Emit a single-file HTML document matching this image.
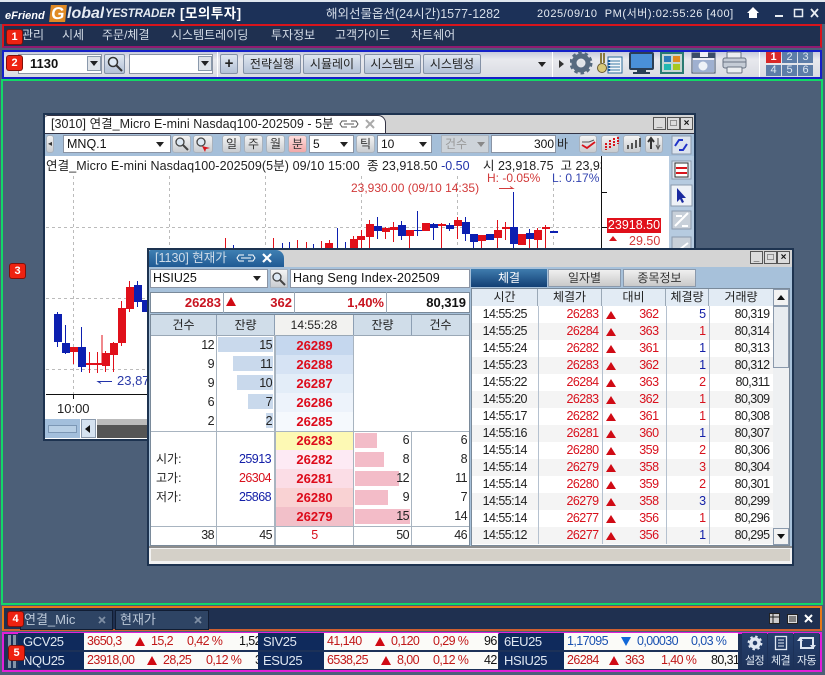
<!DOCTYPE html>
<html lang="ko"><head><meta charset="utf-8"><title>eFriend Global YesTrader</title>
<style>
html,body{margin:0;padding:0;width:825px;height:675px;overflow:hidden;background:#4c5f78}
body{position:relative;font:12px "Liberation Sans","Noto Sans CJK KR","NanumGothic",sans-serif;color:#111}
.a,.a *{box-sizing:border-box}
.a{position:absolute;white-space:nowrap;overflow:hidden}
.r{text-align:right}.c{text-align:center}
.box{position:absolute;box-sizing:border-box;background:transparent}
.m{position:absolute;top:27px;color:#d5dde8;font-size:12px;line-height:16px;white-space:nowrap}
.lab{position:absolute;width:15px;height:14px;background:#ee2211;border-radius:2px;color:#fff;font:bold 11px/14px "Liberation Sans",sans-serif;text-align:center;box-shadow:0 0 0 1px #80100a;z-index:50}
.tb{position:absolute;top:54px;height:20px;background:linear-gradient(#dfe6f0,#b3c1d6);border:1px solid #8491a6;border-radius:2px;font-size:12px;line-height:18px;text-align:center;color:#222;box-sizing:border-box;white-space:nowrap}
.cb{position:absolute;background:#fff;border:1px solid #8a94a4;box-sizing:border-box;white-space:nowrap;overflow:hidden}
.ar{position:absolute;width:0;height:0;border-left:4px solid transparent;border-right:4px solid transparent;border-top:5px solid #222}
.ib{position:absolute;top:135px;height:18px;background:linear-gradient(#f4f4f4,#c9ccd0);border:1px solid #a9b2bd;border-radius:3px;box-sizing:border-box;text-align:center;line-height:16px;font-size:12px;color:#333}
.sb{position:absolute;box-sizing:border-box;background:#dfe3e8;border:1px solid #8a99ac}
.wb{position:absolute;width:13px;height:13px;background:#dcdcdc;border:1px solid #555;box-sizing:border-box;font:bold 10px/11px "Liberation Sans",sans-serif;text-align:center;color:#111}
.hd{position:absolute;background:#d0dde9;text-align:center;color:#222;font-size:12px;line-height:20px;height:20px;top:315px;border-right:1px solid #8d9fb3;box-sizing:border-box}
.n{position:absolute;font-size:12.500px;letter-spacing:-.55px;line-height:16px;text-align:right;white-space:nowrap;color:#222}
.p{position:absolute;left:276px;width:77px;height:19px;font:bold 13px/19px "Liberation Sans",sans-serif;color:#dd0b1b;text-align:center}
.bar{position:absolute;height:15px}
table{border-collapse:collapse;table-layout:fixed;position:absolute;left:472px;top:306px;width:301px}
td{height:17px;padding:0 3px;font-size:12.500px;letter-spacing:-.55px;line-height:17px;text-align:right;border-right:1px solid #b5c1cf;color:#222;overflow:hidden;white-space:nowrap}
tr:nth-child(even) td{background:#f4f4f4}
td.t{text-align:center}
td.x{color:#d8101c}td.b{color:#1420a8}
td.d{position:relative;color:#d8101c;padding-right:7px}
td.d:before{content:"";position:absolute;left:3px;top:5px;border-left:5px solid transparent;border-right:5px solid transparent;border-bottom:8px solid #d00a14}
.nm{position:absolute;width:66px;height:17px;background:#0f2a5c;color:#dfe7f2;font-size:13px;line-height:18px;padding-left:5px;box-sizing:border-box;letter-spacing:-.4px}
.dt{position:absolute;width:174px;height:17px;background:#fbfbf8;overflow:hidden}
.dt span{position:absolute;top:0;font-size:12.500px;line-height:17px;letter-spacing:-.6px;white-space:nowrap}
.up{position:absolute;top:4px;width:0;height:0;border-left:5px solid transparent;border-right:5px solid transparent;border-bottom:9px solid #d00a14}
.dn{position:absolute;top:4px;width:0;height:0;border-left:5px solid transparent;border-right:5px solid transparent;border-top:9px solid #1268d8}
.rd{color:#c01818}.bl{color:#1850b0}
.bt{position:absolute;top:633px;width:25px;height:37px;background:linear-gradient(#26416e,#1c3158);color:#dfe7f2;font-size:11px;text-align:center;box-sizing:border-box;padding-top:21px;line-height:14px;letter-spacing:-.6px}
</style></head><body>

<!-- title bar -->
<div class="a" style="left:0;top:0;width:825px;height:24px;background:#1c3158;border-top:2px solid #dfe6ee"></div>
<div class="a" style="left:5px;top:9px;color:#fff;font:italic bold 11px/14px 'Liberation Sans',sans-serif">eFriend</div>
<div class="a" style="left:50px;top:5px;width:16px;height:17px;background:#e08a25;color:#fff;font:bold 17px/17px 'Liberation Sans',sans-serif;text-align:center;transform:skewX(-6deg)">G</div>
<div class="a" style="left:67px;top:5px;color:#e6ebf2;font:italic bold 16px/18px 'Liberation Sans',sans-serif">lobal</div>
<div class="a" style="left:105px;top:7px;color:#e6ebf2;font:italic bold 11.500px/15px 'Liberation Sans',sans-serif;letter-spacing:-.1px">YESTRADER</div>
<div class="a" style="left:180px;top:5px;color:#fff;font-weight:bold;font-size:13.500px;line-height:18px;letter-spacing:.5px">[모의투자]</div>
<div class="a" style="left:326px;top:5px;color:#d5dde8;font-size:12.500px;line-height:18px">해외선물옵션(24시간)1577-1282</div>
<div class="a" style="left:537px;top:6px;color:#e6ebf2;font-size:11px;line-height:16px;letter-spacing:.55px">2025/09/10&nbsp; PM(서버):02:55:26 [400]</div>
<svg class="a" style="left:745px;top:4px" width="78" height="18" viewBox="0 0 78 18"><path d="M2 9 8 3l6 6h-2v5H4V9z" fill="#fff"/><rect x="30" y="11" width="8" height="2" fill="#e8edf3"/><rect x="49.500" y="5.500" width="8" height="7" fill="none" stroke="#e8edf3" stroke-width="1.500"/><path d="M66 5l7 8M73 5l-7 8" stroke="#e8edf3" stroke-width="1.800"/></svg>

<!-- menu -->
<div class="box" style="left:2px;top:24px;width:820px;height:24px;background:#1f3050;border:2px solid #d8141c;border-bottom-color:#901a70"></div>
<span class="m" style="left:22px">관리</span><span class="m" style="left:62px">시세</span><span class="m" style="left:102px">주문/체결</span><span class="m" style="left:171px">시스템트레이딩</span><span class="m" style="left:271px">투자정보</span><span class="m" style="left:335px">고객가이드</span><span class="m" style="left:411px">차트쉐어</span>
<div class="lab" style="left:7px;top:30px">1</div>

<!-- toolbar -->
<div class="box" style="left:2px;top:50px;width:820px;height:29px;background:linear-gradient(#c8cbdc,#e8e9ee 30%,#d9dbe2);border:2px solid #1420c8"></div>
<div class="a" style="left:18px;top:54px;width:84px;height:20px;background:#fff;border:1px solid #8a94a4;font:bold 13px/18px 'Liberation Sans',sans-serif;padding-left:11px">1130</div>
<div class="sb" style="left:87px;top:56px;width:14px;height:15px"></div><div class="ar" style="left:90px;top:61px"></div>
<div class="tb" style="left:104px;width:21px"></div>
<svg class="a" style="left:106px;top:55px" width="18" height="18"><circle cx="7" cy="7" r="4.500" fill="#dde8f3" stroke="#333" stroke-width="1.500"/><path d="M10.500 10.500 16 16" stroke="#333" stroke-width="2"/></svg>
<div class="a" style="left:129px;top:54px;width:84px;height:20px;background:#fff;border:1px solid #8a94a4"></div>
<div class="sb" style="left:198px;top:56px;width:14px;height:15px"></div><div class="ar" style="left:201px;top:61px"></div>
<div class="a" style="left:217px;top:52px;width:1px;height:25px;background:#fff"></div>
<div class="tb" style="left:220px;width:18px;font-weight:bold;font-size:15px;line-height:17px">+</div>
<div class="tb" style="left:243px;width:58px">전략실행</div><div class="tb" style="left:303px;width:58px">시뮬레이</div><div class="tb" style="left:364px;width:57px">시스템모</div><div class="tb" style="left:423px;width:58px">시스템성</div>
<div class="ar" style="left:538px;top:62px"></div>
<div class="a" style="left:552px;top:52px;width:1px;height:25px;background:#fff"></div>
<div class="a" style="left:559px;top:60px;width:0;height:0;border-top:4px solid transparent;border-bottom:4px solid transparent;border-left:5px solid #333"></div>
<svg class="a" style="left:570px;top:50px" width="180" height="27" viewBox="570 50 180 27">
<circle cx="581" cy="63" r="7" fill="none" stroke="#566a80" stroke-width="5"/><circle cx="581" cy="63" r="10" fill="none" stroke="#566a80" stroke-width="3" stroke-dasharray="3.500 2.800"/><circle cx="581" cy="63" r="3" fill="#dfe3e8"/>
<path d="M601 53v10M604 53v10" stroke="#8a7a40" stroke-width="2"/><circle cx="602" cy="68" r="4.500" fill="#d9c97a" stroke="#6a5a30"/><rect x="608" y="57" width="14" height="16" fill="#f2f6fa" stroke="#2a6a9a"/><path d="M611 61h9M611 64h9M611 67h9M611 70h9" stroke="#3a7aa5"/><path d="M609 60v11" stroke="#1a5a9a" stroke-width="3" stroke-dasharray="2 1"/>
<rect x="630" y="53" width="23" height="16" rx="1" fill="#4a90d8" stroke="#2a3e55" stroke-width="2"/><path d="M637 69h9v3h-9zM633 72h17v2h-17z" fill="#2a3e55"/>
<rect x="661" y="53" width="22" height="20" fill="#c5d5d2" stroke="#2a7a72" stroke-width="2"/><rect x="664" y="56" width="7" height="6" fill="#2a7ab8"/><rect x="673" y="56" width="7" height="6" fill="#e08a20"/><rect x="664" y="64" width="7" height="6" fill="#20b8b0"/><rect x="673" y="64" width="7" height="6" fill="#a8c820"/>
<rect x="692" y="53" width="23" height="20" fill="#eef0f5" stroke="#3a4c68"/><rect x="692" y="53" width="23" height="5" fill="#3a4c68"/><rect x="700" y="52" width="8" height="5" fill="#eef0f5"/><rect x="693" y="60" width="21" height="12" fill="#9fb0d0"/><circle cx="703" cy="66" r="4.500" fill="#eef2f8"/>
<rect x="727" y="52" width="14" height="7" rx="1" fill="#eceef1" stroke="#6a7484"/><rect x="723" y="58" width="23" height="10" rx="2" fill="#c5ccd6" stroke="#6a7484"/><rect x="727" y="67" width="15" height="6" rx="1" fill="#eceef1" stroke="#6a7484"/><path d="M723 62h23" stroke="#6a7484"/>
</svg>
<div class="a" style="left:759px;top:52px;width:1px;height:25px;background:#fff"></div>
<div class="a c" style="left:766px;top:52px;width:15px;height:11px;background:#d82828;color:#fff;font:bold 11px/11px 'Liberation Sans',sans-serif">1</div>
<div class="a c" style="left:782px;top:52px;width:15px;height:11px;background:#5d7da8;color:#dde6f0;font:11px/11px 'Liberation Sans',sans-serif">2</div>
<div class="a c" style="left:798px;top:52px;width:15px;height:11px;background:#5d7da8;color:#dde6f0;font:11px/11px 'Liberation Sans',sans-serif">3</div>
<div class="a c" style="left:766px;top:65px;width:15px;height:11px;background:#5d7da8;color:#dde6f0;font:11px/11px 'Liberation Sans',sans-serif">4</div>
<div class="a c" style="left:782px;top:65px;width:15px;height:11px;background:#5d7da8;color:#dde6f0;font:11px/11px 'Liberation Sans',sans-serif">5</div>
<div class="a c" style="left:798px;top:65px;width:15px;height:11px;background:#5d7da8;color:#dde6f0;font:11px/11px 'Liberation Sans',sans-serif">6</div>
<div class="lab" style="left:7px;top:56px">2</div>

<!-- workspace -->
<div class="box" style="left:1px;top:79px;width:822px;height:526px;background:#4c5f78;border:2px solid #12d868"></div>
<div class="lab" style="left:10px;top:264px">3</div>

<!-- chart window -->
<div class="a" style="left:43px;top:113px;width:653px;height:328px;background:#fff;border:2px solid #1d3350"></div>
<div class="a" style="left:45px;top:115px;width:649px;height:18px;background:#d4d4d4"></div>
<div class="a" style="left:45px;top:115px;width:341px;height:18px;background:#fff;border-radius:3px 8px 0 0;border-right:1px solid #334;border-top:1px solid #334"></div>
<div class="a" style="left:51px;top:115px;font-size:12.500px;line-height:18px;color:#222;letter-spacing:.05px">[3010] 연결_Micro E-mini Nasdaq100-202509 - 5분</div>
<svg class="a" style="left:339px;top:119px" width="20" height="10"><path d="M8 2H3L1 5l2 3h5M12 2h5l2 3-2 3h-5M5 5h10" fill="none" stroke="#555"/></svg>
<svg class="a" style="left:364px;top:118px" width="12" height="12"><path d="M2 2l8 8M10 2l-8 8" stroke="#aaa" stroke-width="2"/></svg>
<div class="wb" style="left:653px;top:117px">_</div><div class="wb" style="left:667px;top:117px">□</div><div class="wb" style="left:680px;top:117px">×</div>
<div class="a" style="left:45px;top:133px;width:649px;height:23px;background:#a5bfd9;border-top:1px solid #334"></div>
<div class="ib" style="left:46px;width:8px;font-size:8px">◂</div>
<div class="cb" style="left:63px;top:135px;width:108px;height:18px;font-size:12.500px;line-height:16px;padding-left:3px">MNQ.1</div><div class="ar" style="left:156px;top:142px"></div>
<div class="ib" style="left:172px;width:19px"></div><div class="ib" style="left:193px;width:20px"></div>
<svg class="a" style="left:174px;top:136px" width="40" height="16"><circle cx="6" cy="6" r="4" fill="#dde8f3" stroke="#444" stroke-width="1.300"/><path d="M9 9l5 5" stroke="#444" stroke-width="2"/><circle cx="27" cy="6" r="4" fill="#dde8f3" stroke="#444" stroke-width="1.300"/><path d="M28 10l8 2-4 1-1 3z" fill="#d8141c"/></svg>
<div class="ib" style="left:222px;width:19px">일</div><div class="ib" style="left:244px;width:19px">주</div><div class="ib" style="left:266px;width:19px">월</div><div class="ib" style="left:288px;width:19px;background:linear-gradient(#fdd,#f2a8a8)">분</div>
<div class="cb" style="left:309px;top:135px;width:45px;height:18px;line-height:16px;padding-left:3px">5</div><div class="ar" style="left:340px;top:142px"></div>
<div class="ib" style="left:356px;width:19px">틱</div>
<div class="cb" style="left:377px;top:135px;width:55px;height:18px;line-height:16px;padding-left:3px">10</div><div class="ar" style="left:419px;top:142px"></div>
<div class="ib" style="left:441px;width:48px;background:#cdd3d9;color:#999;text-align:left;padding-left:3px;border-radius:0">건수</div><div class="ar" style="left:477px;top:142px;border-top-color:#888"></div>
<div class="cb r" style="left:491px;top:135px;width:65px;height:18px;line-height:16px;padding-right:1px">300</div>
<div class="a" style="left:557px;top:135px;font-size:12px;line-height:18px;color:#222">바</div>
<div class="ib" style="left:579px;width:18px"></div><div class="ib" style="left:601px;width:18px"></div><div class="ib" style="left:623px;width:18px"></div><div class="ib" style="left:645px;width:18px"></div>
<svg class="a" style="left:579px;top:135px" width="86" height="18"><path d="M3 10l5 3 8-6" fill="none" stroke="#d8141c" stroke-width="1.800"/><path d="M3 7h7l5-2" fill="none" stroke="#555"/><path d="M27 8v7M31 5v8M35 3v9M39 2v7" stroke="#d8141c" stroke-width="2" stroke-dasharray="2 1"/><path d="M49 14v-4M53 14v-6M57 13v-8M61 12v-9" stroke="#555" stroke-width="2"/><path d="M72 14V5M69 7l3-4 3 4" stroke="#333" stroke-width="2" fill="none"/><path d="M79 3v10M77 10l2 4 2-4" stroke="#555" fill="none"/></svg>
<div class="a" style="left:669px;top:156px;width:25px;height:284px;background:#b6cbe0"></div>
<svg class="a" style="left:669px;top:133px" width="25" height="125"><rect x="3" y="3" width="19" height="18" fill="#dce4ee" stroke="#8a99ac"/><path d="M6 13l4-6 4 0M18 11l-4 6-4 0" fill="none" stroke="#2033c8" stroke-width="2"/><rect x="3" y="28" width="19" height="18" fill="#dce4ee" stroke="#8a99ac"/><path d="M6 30h13v14H6z" fill="#fff" stroke="#333"/><path d="M7 35h11M7 40h11" stroke="#d8141c" stroke-width="2"/><rect x="2" y="52" width="21" height="21" fill="#eef2f7" stroke="#8a99ac"/><path d="M8 55l0 14 3-3 2 4 2-1-2-4 4 0z" fill="#1a2aa0"/><rect x="3" y="78" width="19" height="18" fill="#c8d0d9" stroke="#8a99ac"/><path d="M6 93l13-13M7 83h6M13 93h6" stroke="#fff" stroke-width="2"/><rect x="3" y="104" width="19" height="20" fill="#c8d0d9" stroke="#8a99ac"/><path d="M6 120l13-10" stroke="#fff" stroke-width="2"/></svg>

<svg class="a" style="left:0;top:0;overflow:hidden" width="825" height="675" viewBox="0 0 825 675">
<g stroke="#bbb" stroke-dasharray="3 3"><path d="M73.500 176V394M169.500 176V394M265.500 176V394M361.500 176V394M457.500 176V394M553.500 176V394"/><path d="M46 227.500H600M46 298.500H600M46 369.500H600"/></g>
<path d="M601.500 156V394M601 192.500h6M601 227.500h6M46 394.500H601M73.500 394v5" stroke="#111" fill="none"/>
<path d="M499 188.500h14l-3-2" stroke="#d23a3a" fill="none"/>
<path d="M112 381.500H98l3 2" stroke="#2233aa" fill="none"/>
<g stroke="#e0101a" fill="#e0101a">
<path d="M225.500 238v10M273.500 238v10M297.500 240v8M306.500 242v6M321.500 241v7M329.500 240v8M353.500 236v12M361.500 230v18M369.500 220v28M385.500 227v12M393.500 222v20M409.500 230v20M441.500 223v25M457.500 217v22M481.500 235v13M505.500 222v18M497.500 220v28M529.500 229v20M537.500 228v20M545.500 225v25M102 335v30M73.500 352v12M89.500 352v21M97.500 352v21M105.500 351v21M113.500 342v30M121.500 301v45M129.500 281v31"/>
<g stroke="none"><rect x="325" y="243" width="8" height="6"/><rect x="350" y="239" width="8" height="10"/><rect x="357" y="236" width="8" height="4"/><rect x="366" y="224" width="8" height="13"/><rect x="382" y="228" width="8" height="4"/><rect x="390" y="227" width="8" height="3"/><rect x="406" y="230" width="8" height="6"/><rect x="422" y="223" width="8" height="8"/><rect x="438" y="224" width="8" height="2"/><rect x="454" y="220" width="8" height="6"/><rect x="478" y="235" width="8" height="6"/><rect x="494" y="230" width="8" height="8"/><rect x="502" y="227" width="8" height="2"/><rect x="518" y="234" width="8" height="11"/><rect x="534" y="230" width="8" height="10"/><rect x="542" y="227" width="8" height="2"/><rect x="70" y="347" width="8" height="5"/><rect x="86" y="363" width="8" height="2"/><rect x="94" y="363" width="8" height="2"/><rect x="102" y="353" width="8" height="13"/><rect x="110" y="343" width="8" height="12"/><rect x="118" y="308" width="8" height="35"/><rect x="126" y="287" width="8" height="22"/></g>
</g>
<g stroke="#0c1fb0" fill="#0c1fb0">
<path d="M233.500 245v3M282.500 243v5M289.500 242v6M313.500 244v4M337.500 228v20M345.500 242v6M377.500 217v22M401.500 221v19M417.500 211v25M433.500 223v17M449.500 223v8M465.500 217v24M473.500 234v15M513.500 192v56M529.500 229v10M57.500 312v35M65.500 325v29M81.500 327v45M137.500 281v26"/>
<g stroke="none"><rect x="374" y="226" width="8" height="5"/><rect x="398" y="225" width="8" height="11"/><rect x="414" y="230" width="8" height="1"/><rect x="430" y="224" width="8" height="4"/><rect x="446" y="225" width="8" height="4"/><rect x="462" y="222" width="8" height="12"/><rect x="470" y="234" width="8" height="8"/><rect x="486" y="234" width="8" height="6"/><rect x="510" y="227" width="8" height="17"/><rect x="526" y="233" width="8" height="6"/><rect x="550" y="231" width="8" height="2"/><rect x="54" y="314" width="8" height="28"/><rect x="62" y="343" width="8" height="10"/><rect x="78" y="347" width="8" height="20"/><rect x="134" y="285" width="8" height="17"/><rect x="142" y="300" width="6" height="12"/></g>
</g>
<path d="M97 438v-14l20 -1 30 2v13z" fill="#555"/>
</svg>
<div class="a" style="left:46px;top:158px;font-size:12.500px;line-height:16px;color:#222;letter-spacing:.1px">연결_Micro E-mini Nasdaq100-202509(5분) 09/10 15:00</div>
<div class="a" style="left:367px;top:158px;font-size:12.500px;line-height:16px;color:#222">종 23,918.50 <span style="color:#2233aa">-0.50</span></div>
<div class="a" style="left:483px;top:158px;width:118px;font-size:12.500px;line-height:16px;color:#222">시 23,918.75&nbsp; 고 23,930</div>
<div class="a" style="left:487px;top:171px;font-size:12px;line-height:14px;color:#d23a3a">H: -0.05%</div>
<div class="a" style="left:552px;top:171px;font-size:12px;line-height:14px;color:#3344b0">L: 0.17%</div>
<div class="a" style="left:351px;top:181px;font-size:12px;line-height:15px;color:#d23a3a">23,930.00 (09/10 14:35)</div>
<div class="a c" style="left:607px;top:218px;width:54px;height:15px;background:#e0101a;color:#fff;font-size:12.500px;line-height:15px">23918.50</div>
<div class="a" style="left:609px;top:236px;width:0;height:0;border-left:4px solid transparent;border-right:4px solid transparent;border-bottom:5px solid #d8141c"></div>
<div class="a" style="left:629px;top:234px;font-size:12.500px;line-height:15px;color:#d23a3a">29.50</div>
<div class="a" style="left:117px;top:373px;width:30px;font-size:13px;line-height:16px;color:#2a3aa8">23,87</div>
<div class="a" style="left:57px;top:401px;font-size:13px;line-height:16px;color:#222">10:00</div>
<div class="a" style="left:45px;top:419px;width:35px;height:19px;background:#a3bfdc"></div>
<div class="a" style="left:48px;top:425px;width:29px;height:8px;border:1px solid #7c97b5;background:#b8cfe5"></div>
<div class="a" style="left:81px;top:419px;width:15px;height:19px;background:#d5e2f0;border:1px solid #8a99ac"></div>
<div class="a" style="left:85px;top:425px;width:0;height:0;border-top:4px solid transparent;border-bottom:4px solid transparent;border-right:5px solid #111"></div>
<div class="a" style="left:97px;top:419px;width:50px;height:6px;background:#bbb"></div>

<!-- quote window -->
<div class="a" style="left:147px;top:248px;width:647px;height:318px;background:#a7c1da;border:2px solid #1d3350"></div>
<div class="a" style="left:149px;top:250px;width:643px;height:17px;background:#d4d4d4"></div>
<div class="a" style="left:149px;top:250px;width:135px;height:17px;background:linear-gradient(#3f7fb2,#205a94);border-radius:2px 8px 0 0"></div>
<div class="a" style="left:155px;top:250px;font-size:12.500px;line-height:17px;color:#cfdce9">[1130] 현재가</div>
<svg class="a" style="left:236px;top:253px" width="20" height="10"><path d="M8 2H3L1 5l2 3h5M12 2h5l2 3-2 3h-5M5 5h10" fill="none" stroke="#fff"/></svg>
<svg class="a" style="left:261px;top:252px" width="12" height="12"><path d="M2 2l8 8M10 2l-8 8" stroke="#fff" stroke-width="2.200"/></svg>
<div class="wb" style="left:750px;top:251px">_</div><div class="wb" style="left:764px;top:251px">□</div><div class="wb" style="left:777px;top:251px">×</div>
<div class="cb" style="left:150px;top:269px;width:118px;height:19px;font-size:12.500px;line-height:17px;padding-left:2px">HSIU25</div><div class="ar" style="left:253px;top:276px"></div>
<div class="ib" style="left:270px;top:269px;width:18px;height:19px;border-radius:0"></div>
<svg class="a" style="left:271px;top:271px" width="16" height="16"><circle cx="6" cy="6" r="4" fill="#dde8f3" stroke="#444" stroke-width="1.300"/><path d="M9 9l5 5" stroke="#444" stroke-width="2"/></svg>
<div class="cb" style="left:290px;top:269px;width:180px;height:19px;font-size:12.500px;line-height:17px;padding-left:2px;letter-spacing:.2px">Hang Seng Index-202509</div>
<div class="a" style="left:150px;top:292px;width:320px;height:21px;background:#fff;border:1px solid #7a8a9a"></div>
<div class="a" style="left:223px;top:292px;width:1px;height:21px;background:#9aa8b6"></div><div class="a" style="left:294px;top:292px;width:1px;height:21px;background:#9aa8b6"></div><div class="a" style="left:386px;top:292px;width:1px;height:21px;background:#9aa8b6"></div>
<div class="a r" style="left:150px;top:293px;width:71px;font:bold 13px/19px 'Liberation Sans',sans-serif;color:#c81420">26283</div>
<div class="a" style="left:226px;top:297px;width:0;height:0;border-left:5px solid transparent;border-right:5px solid transparent;border-bottom:9px solid #d00a14"></div>
<div class="a r" style="left:240px;top:293px;width:52px;font:bold 13px/19px 'Liberation Sans',sans-serif;color:#c81420">362</div>
<div class="a r" style="left:300px;top:293px;width:84px;font:bold 13px/19px 'Liberation Sans',sans-serif;color:#c81420">1,40%</div>
<div class="a r" style="left:390px;top:293px;width:76px;font:bold 13px/19px 'Liberation Sans',sans-serif;color:#111">80,319</div>

<div class="a" style="left:150px;top:314px;width:320px;height:232px;background:#fff;border:1px solid #7a8a9a"></div>
<div class="hd" style="left:151px;width:66px">건수</div><div class="hd" style="left:217px;width:58px">잔량</div><div class="hd" style="left:275px;width:79px;background:#f2f2f0">14:55:28</div><div class="hd" style="left:354px;width:58px">잔량</div><div class="hd" style="left:412px;width:57px;border-right:0">건수</div>
<div class="a" style="left:151px;top:335px;width:318px;height:1px;background:#9aa8b6"></div>
<div class="a" style="left:216px;top:335px;width:1px;height:210px;background:#a8b4c0"></div>
<div class="a" style="left:274px;top:335px;width:2px;height:210px;background:#a8b4c0"></div>
<div class="a" style="left:353px;top:335px;width:1px;height:210px;background:#a8b4c0"></div>
<div class="a" style="left:411px;top:431px;width:1px;height:114px;background:#a8b4c0"></div>
<div class="a" style="left:151px;top:431px;width:318px;height:1px;background:#a8b4c0"></div>
<div class="a" style="left:151px;top:526px;width:318px;height:1px;background:#a8b4c0"></div>

<div class="bar" style="left:218px;top:337px;width:55px;background:#c9d9ec"></div>
<div class="bar" style="left:233px;top:356px;width:40px;background:#c9d9ec"></div>
<div class="bar" style="left:237px;top:375px;width:36px;background:#c9d9ec"></div>
<div class="bar" style="left:248px;top:394px;width:25px;background:#c9d9ec"></div>
<div class="bar" style="left:266px;top:413px;width:7px;background:#c9d9ec"></div>
<div class="a" style="left:276px;top:336px;width:77px;height:19px;background:#c5d7ee"></div>
<div class="a" style="left:276px;top:355px;width:77px;height:19px;background:#d6e3f4"></div>
<div class="a" style="left:276px;top:374px;width:77px;height:19px;background:#e3edf8"></div>
<div class="a" style="left:276px;top:393px;width:77px;height:19px;background:#edf3fb"></div>
<div class="a" style="left:276px;top:412px;width:77px;height:19px;background:#f5f9fd"></div>
<div class="a" style="left:276px;top:432px;width:77px;height:18px;background:#fdf9b4"></div>
<div class="a" style="left:276px;top:450px;width:77px;height:19px;background:#fdeaf4"></div>
<div class="a" style="left:276px;top:469px;width:77px;height:19px;background:#fbdde6"></div>
<div class="a" style="left:276px;top:488px;width:77px;height:19px;background:#f9d2d3"></div>
<div class="a" style="left:276px;top:507px;width:77px;height:19px;background:#f2c0c9"></div>
<span class="p" style="top:336px">26289</span><span class="p" style="top:355px">26288</span><span class="p" style="top:374px">26287</span><span class="p" style="top:393px">26286</span><span class="p" style="top:412px">26285</span><span class="p" style="top:431px">26283</span><span class="p" style="top:450px">26282</span><span class="p" style="top:469px">26281</span><span class="p" style="top:488px">26280</span><span class="p" style="top:507px">26279</span>
<span class="n" style="left:170px;width:44px;top:337px">12</span><span class="n" style="left:170px;width:44px;top:356px">9</span><span class="n" style="left:170px;width:44px;top:375px">9</span><span class="n" style="left:170px;width:44px;top:394px">6</span><span class="n" style="left:170px;width:44px;top:413px">2</span>
<span class="n" style="left:230px;width:42px;top:337px">15</span><span class="n" style="left:230px;width:42px;top:356px">11</span><span class="n" style="left:230px;width:42px;top:375px">10</span><span class="n" style="left:230px;width:42px;top:394px">7</span><span class="n" style="left:230px;width:42px;top:413px">2</span>
<div class="bar" style="left:355px;top:433px;width:22px;background:#f3bcc8"></div><div class="bar" style="left:355px;top:452px;width:29px;background:#f3bcc8"></div><div class="bar" style="left:355px;top:471px;width:44px;background:#f3bcc8"></div><div class="bar" style="left:355px;top:490px;width:33px;background:#f3bcc8"></div><div class="bar" style="left:355px;top:509px;width:55px;background:#f3bcc8"></div>
<span class="n" style="left:370px;width:39px;top:432px">6</span><span class="n" style="left:370px;width:39px;top:451px">8</span><span class="n" style="left:370px;width:39px;top:470px">12</span><span class="n" style="left:370px;width:39px;top:489px">9</span><span class="n" style="left:370px;width:39px;top:508px">15</span>
<span class="n" style="left:425px;width:42px;top:432px">6</span><span class="n" style="left:425px;width:42px;top:451px">8</span><span class="n" style="left:425px;width:42px;top:470px">11</span><span class="n" style="left:425px;width:42px;top:489px">7</span><span class="n" style="left:425px;width:42px;top:508px">14</span>
<span class="n" style="left:156px;top:451px;letter-spacing:0;font-size:12px">시가:</span><span class="n" style="left:156px;top:470px;letter-spacing:0;font-size:12px">고가:</span><span class="n" style="left:156px;top:489px;letter-spacing:0;font-size:12px">저가:</span>
<span class="n" style="left:230px;width:41px;top:451px;color:#1420a8">25913</span><span class="n" style="left:230px;width:41px;top:470px;color:#d8101c">26304</span><span class="n" style="left:230px;width:41px;top:489px;color:#1420a8">25868</span>
<span class="n" style="left:170px;width:44px;top:527px">38</span><span class="n" style="left:230px;width:42px;top:527px">45</span><span class="n c" style="left:276px;width:77px;top:527px;color:#d8101c;text-align:center">5</span><span class="n" style="left:370px;width:39px;top:527px">50</span><span class="n" style="left:425px;width:42px;top:527px">46</span>

<div class="a" style="left:149px;top:546px;width:643px;height:18px;background:#f2f2f2;border-top:2px solid #8d8d8d"></div>
<div class="a" style="left:151px;top:549px;width:639px;height:12px;background:#d4d0c8"></div>

<!-- right panel -->
<div class="a c" style="left:471px;top:269px;width:76px;height:18px;background:linear-gradient(#3f7cae,#123f74);color:#fff;font-size:12px;line-height:18px">체결</div>
<div class="a c" style="left:548px;top:269px;width:73px;height:18px;background:linear-gradient(#f0f0f0,#c9c9c9);border:1px solid #8a99ac;font-size:12px;line-height:16px;color:#333">일자별</div>
<div class="a c" style="left:623px;top:269px;width:73px;height:18px;background:linear-gradient(#f0f0f0,#c9c9c9);border:1px solid #8a99ac;font-size:12px;line-height:16px;color:#333">종목정보</div>
<div class="a" style="left:471px;top:288px;width:319px;height:258px;background:#fff;border:1px solid #7a8a9a"></div>
<div class="a c" style="left:472px;top:289px;width:66px;height:17px;background:#e2ebf4;border-right:1px solid #9aa8b6;line-height:17px;color:#222">시간</div>
<div class="a c" style="left:538px;top:289px;width:64px;height:17px;background:#e2ebf4;border-right:1px solid #9aa8b6;line-height:17px;color:#222">체결가</div>
<div class="a c" style="left:602px;top:289px;width:64px;height:17px;background:#e2ebf4;border-right:1px solid #9aa8b6;line-height:17px;color:#222">대비</div>
<div class="a c" style="left:666px;top:289px;width:43px;height:17px;background:#e2ebf4;border-right:1px solid #9aa8b6;line-height:17px;color:#222">체결량</div>
<div class="a c" style="left:709px;top:289px;width:64px;height:17px;background:#e2ebf4;line-height:17px;color:#222">거래량</div>
<table>
<colgroup><col style="width:66px"><col style="width:64px"><col style="width:64px"><col style="width:43px"><col style="width:64px"></colgroup>
<tr><td class="t">14:55:25</td><td class="x">26283</td><td class="d">362</td><td class="b">5</td><td>80,319</td></tr>
<tr><td class="t">14:55:25</td><td class="x">26284</td><td class="d">363</td><td class="x">1</td><td>80,314</td></tr>
<tr><td class="t">14:55:24</td><td class="x">26282</td><td class="d">361</td><td class="b">1</td><td>80,313</td></tr>
<tr><td class="t">14:55:23</td><td class="x">26283</td><td class="d">362</td><td class="b">1</td><td>80,312</td></tr>
<tr><td class="t">14:55:22</td><td class="x">26284</td><td class="d">363</td><td class="x">2</td><td>80,311</td></tr>
<tr><td class="t">14:55:20</td><td class="x">26283</td><td class="d">362</td><td class="x">1</td><td>80,309</td></tr>
<tr><td class="t">14:55:17</td><td class="x">26282</td><td class="d">361</td><td class="x">1</td><td>80,308</td></tr>
<tr><td class="t">14:55:16</td><td class="x">26281</td><td class="d">360</td><td class="b">1</td><td>80,307</td></tr>
<tr><td class="t">14:55:14</td><td class="x">26280</td><td class="d">359</td><td class="x">2</td><td>80,306</td></tr>
<tr><td class="t">14:55:14</td><td class="x">26279</td><td class="d">358</td><td class="x">3</td><td>80,304</td></tr>
<tr><td class="t">14:55:14</td><td class="x">26280</td><td class="d">359</td><td class="x">2</td><td>80,301</td></tr>
<tr><td class="t">14:55:14</td><td class="x">26279</td><td class="d">358</td><td class="b">3</td><td>80,299</td></tr>
<tr><td class="t">14:55:14</td><td class="x">26277</td><td class="d">356</td><td class="x">1</td><td>80,296</td></tr>
<tr><td class="t">14:55:12</td><td class="x">26277</td><td class="d">356</td><td class="b">1</td><td>80,295</td></tr>
</table>
<div class="a" style="left:773px;top:289px;width:16px;height:256px;background:#eef0f2"></div>
<div class="sb" style="left:773px;top:289px;width:16px;height:17px;background:#f2f2f2"></div>
<div class="a" style="left:777px;top:295px;width:0;height:0;border-left:4px solid transparent;border-right:4px solid transparent;border-bottom:5px solid #111"></div>
<div class="sb" style="left:773px;top:306px;width:16px;height:62px;background:#e8ecf0"></div>
<div class="sb" style="left:773px;top:528px;width:16px;height:17px;background:#f2f2f2"></div>
<div class="ar" style="left:777px;top:534px;border-top-color:#111"></div>

<!-- bottom tabs -->
<div class="box" style="left:2px;top:606px;width:820px;height:25px;background:#1f3050;border:2px solid #e87818;border-bottom-color:#d06030"></div>
<div class="a" style="left:20px;top:610px;width:93px;height:20px;background:#2e4464;border:1px solid #111d33;color:#bcc8d8;font-size:13px;line-height:18px;padding-left:3px">연결_Mic</div>
<div class="a" style="left:115px;top:610px;width:94px;height:20px;background:#2e4464;border:1px solid #111d33;color:#bcc8d8;font-size:13px;line-height:18px;padding-left:4px">현재가</div>
<svg class="a" style="left:95px;top:614px" width="114" height="12"><path d="M4 3l6 6M10 3l-6 6M100 3l6 6M106 3l-6 6" stroke="#7e8ea4" stroke-width="1.800"/></svg>
<svg class="a" style="left:768px;top:612px" width="46" height="14"><rect x="1.500" y="1.500" width="10" height="10" fill="#ccc" stroke="#222"/><path d="M1 5h11M5 2v10" stroke="#222"/><rect x="19.500" y="2.500" width="10" height="9" fill="#ddd" stroke="#222"/><path d="M21 5h7M21 7h7M21 9h7" stroke="#222"/><path d="M37 3l7 7M44 3l-7 7" stroke="#fff" stroke-width="2"/></svg>
<div class="lab" style="left:8px;top:612px">4</div>

<!-- ticker -->
<div class="box" style="left:2px;top:632px;width:820px;height:40px;background:#1c3158;border:2px solid #e020d8"></div>
<div class="a" style="left:8px;top:635px;width:3px;height:33px;background:#8494a8"></div><div class="a" style="left:13px;top:635px;width:3px;height:33px;background:#8494a8"></div>

<div class="nm" style="left:18px;top:633px">GCV25</div><div class="nm" style="left:18px;top:652px">NQU25</div>
<div class="nm" style="left:258px;top:633px">SIV25</div><div class="nm" style="left:258px;top:652px">ESU25</div>
<div class="nm" style="left:499px;top:633px">6EU25</div><div class="nm" style="left:499px;top:652px">HSIU25</div>

<div class="dt" style="left:84px;top:633px"><span class="rd" style="left:3px">3650,3</span><i class="up" style="left:51px"></i><span class="rd" style="left:67px">15,2</span><span class="rd" style="left:103px">0,42 %</span><span style="left:155px">1,52</span></div>
<div class="dt" style="left:84px;top:652px"><span class="rd" style="left:3px">23918,00</span><i class="up" style="left:63px"></i><span class="rd" style="left:79px">28,25</span><span class="rd" style="left:122px">0,12 %</span><span style="left:171px">3</span></div>
<div class="dt" style="left:324px;top:633px"><span class="rd" style="left:3px">41,140</span><i class="up" style="left:51px"></i><span class="rd" style="left:67px">0,120</span><span class="rd" style="left:109px">0,29 %</span><span style="left:160px">96</span></div>
<div class="dt" style="left:324px;top:652px"><span class="rd" style="left:3px">6538,25</span><i class="up" style="left:57px"></i><span class="rd" style="left:73px">8,00</span><span class="rd" style="left:109px">0,12 %</span><span style="left:160px">42</span></div>
<div class="dt" style="left:564px;top:633px"><span class="bl" style="left:3px">1,17095</span><i class="dn" style="left:57px"></i><span class="bl" style="left:73px">0,00030</span><span class="bl" style="left:127px">0,03 %</span></div>
<div class="dt" style="left:564px;top:652px"><span class="rd" style="left:3px">26284</span><i class="up" style="left:45px"></i><span class="rd" style="left:61px">363</span><span class="rd" style="left:97px">1,40 %</span><span style="left:147px">80,31</span></div>

<div class="bt" style="left:742px">설정</div><div class="bt" style="left:768px">체결</div><div class="bt" style="left:794px">자동</div>
<svg class="a" style="left:742px;top:634px" width="78" height="20"><circle cx="13" cy="9" r="4" fill="none" stroke="#dfe7f2" stroke-width="3.500"/><circle cx="13" cy="9" r="6.500" fill="none" stroke="#dfe7f2" stroke-width="1.800" stroke-dasharray="2.500 2.600"/><rect x="33.500" y="2.500" width="11" height="13" fill="none" stroke="#dfe7f2" stroke-width="1.300"/><path d="M36 6h6M36 9h6M36 12h6" stroke="#dfe7f2"/><path d="M58 4h13v10M72 14h-13V5" fill="none" stroke="#dfe7f2" stroke-width="2"/><path d="M55 7l3-4 3 4zM68 11l3 4 3-4z" fill="#dfe7f2"/></svg>
<div class="lab" style="left:9px;top:646px">5</div>
</body></html>
